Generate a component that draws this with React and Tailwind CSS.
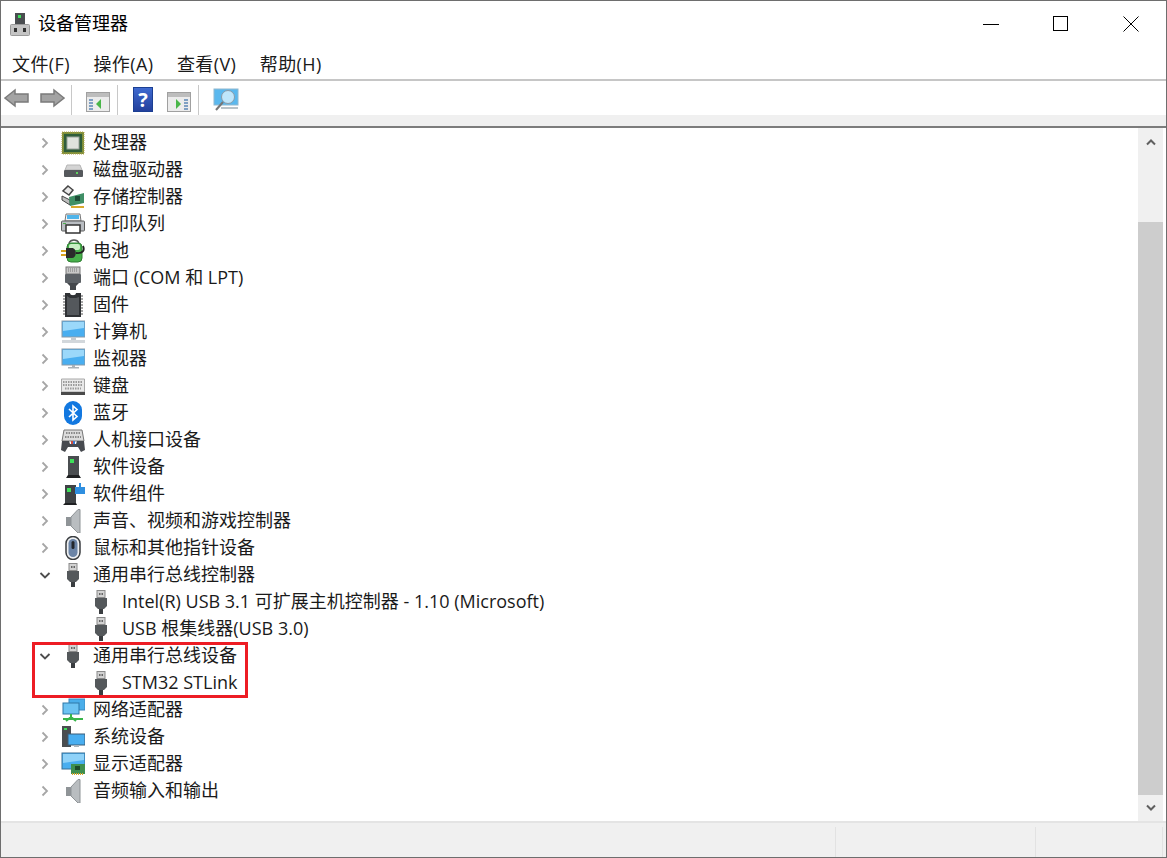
import React from 'react';

const fontStack = { fontFamily: '"Open Sans", "Noto Sans CJK SC", sans-serif' };

// tree icons, all 24x24
const Chip = () => (
  <svg width="24" height="24" viewBox="0 0 24 24">
    <rect x="1" y="1" width="22" height="22" fill="#7d8f3a" stroke="#b5a24a" strokeDasharray="1 1" />
    <rect x="3" y="3" width="18" height="18" fill="#2f5d3a" />
    <rect x="6" y="6" width="12" height="12" fill="#dfe3dc" stroke="#9aa39a" />
  </svg>
);

const Disk = () => (
  <svg width="24" height="24" viewBox="0 0 24 24">
    <path d="M4 12 L6 7 H19 L21 12 Z" fill="#d4d4d4" stroke="#b5b5b5" />
    <rect x="3" y="12" width="19" height="7" rx="1" fill="#55585c" />
    <rect x="15" y="14" width="2" height="2" fill="#5fd35f" />
  </svg>
);

const Storage = () => (
  <svg width="24" height="24" viewBox="0 0 24 24">
    <path d="M7 1 L12 5 L8 10 L2 6 Z" fill="#e8e8e8" stroke="#444" strokeWidth="1.5" />
    <path d="M1 11 L9 15 V20 L1 15 Z" fill="#bdbdbd" stroke="#444" />
    <path d="M8 12 L23 8 V18 L9 21 Z" fill="#3f8f66" />
    <rect x="14" y="11" width="5" height="5" fill="#1f4d38" />
    <path d="M10 21 H23 V23 H10 Z" fill="#d9a82e" />
  </svg>
);

const Printer = () => (
  <svg width="24" height="24" viewBox="0 0 24 24">
    <path d="M5 2 H19 L20 9 H4 Z" fill="#f4f4f4" stroke="#777" />
    <rect x="6" y="3" width="12" height="4" fill="#4fb4ea" />
    <rect x="0.5" y="9" width="23" height="10" rx="1" fill="#b9bdc2" stroke="#5c5c5c" />
    <rect x="5" y="13" width="14" height="8" fill="#fff" stroke="#333" strokeWidth="1.5" />
    <rect x="2" y="11" width="3" height="1" fill="#4fae4f" />
  </svg>
);

const Battery = () => (
  <svg width="24" height="24" viewBox="0 0 24 24">
    <path d="M8 4 C10 0 16 0 18 4" fill="none" stroke="#555" strokeWidth="1.5" />
    <rect x="6" y="4" width="15" height="19" rx="4" fill="#46b04a" stroke="#2e7d32" />
    <rect x="8" y="5" width="11" height="6" rx="2" fill="#c9eec4" />
    <path d="M0 12 H6 M0 16 H6" stroke="#d8a21e" strokeWidth="2" />
    <path d="M5 9 H11 C16 9 16 19 11 19 H5 Z" fill="#2b2b2b" />
    <path d="M15 14 C22 15 24 11 22 7" fill="none" stroke="#222" strokeWidth="1.8" />
  </svg>
);

const Port = () => (
  <svg width="24" height="24" viewBox="0 0 24 24">
    <rect x="5" y="1" width="14" height="7" fill="#c8c8c8" stroke="#777" />
    <path d="M7 3 H17 M7 5 H17" stroke="#777" strokeDasharray="1 1" />
    <rect x="4" y="8" width="16" height="9" rx="1" fill="#5c6166" />
    <path d="M6 17 L9 20 V24 H15 V20 L18 17 Z" fill="#44484c" />
  </svg>
);

const Firmware = () => (
  <svg width="24" height="24" viewBox="0 0 24 24">
    <path d="M2 3 H22 M2 6 H22 M2 9 H22 M2 12 H22 M2 15 H22 M2 18 H22 M2 21 H22" stroke="#8a8a8a" strokeWidth="1.5" />
    <path d="M4 0 H9 C9 3 15 3 15 0 H20 V24 H4 Z" fill="#2f3235" />
    <path d="M6 3 V22 H18 V4 L15 5 H9 Z" fill="#54585c" />
  </svg>
);

const Computer = () => (
  <svg width="24" height="24" viewBox="0 0 24 24">
    <rect x="1" y="1" width="23" height="16" fill="#49aef0" stroke="#8a9aa8" />
    <path d="M2 2 H23 V8 L2 11 Z" fill="#9bd8fa" />
    <rect x="10" y="17" width="5" height="3" fill="#c2c9cf" />
    <rect x="1" y="20" width="23" height="3" fill="#d2d7db" />
  </svg>
);

const Monitor = () => (
  <svg width="24" height="24" viewBox="0 0 24 24">
    <rect x="1" y="2" width="23" height="16" fill="#49aef0" stroke="#8a9aa8" />
    <path d="M2 3 H23 V9 L2 12 Z" fill="#9bd8fa" />
    <rect x="11" y="18" width="3" height="2" fill="#aab2b8" />
    <rect x="7" y="20" width="11" height="1.5" fill="#aab2b8" />
  </svg>
);

const Keyboard = () => (
  <svg width="24" height="24" viewBox="0 0 24 24">
    <path d="M0.5 5 H23.5 V18 H0.5 Z" fill="#e9e9e9" stroke="#a8a8a8" />
    <path d="M2 8 H22 M2 11 H22 M4 14.5 H20" stroke="#9b9b9b" strokeWidth="2" strokeDasharray="1.5 1" />
    <rect x="0" y="18" width="24" height="3" fill="#4a4a4a" />
  </svg>
);

const Bluetooth = () => (
  <svg width="24" height="24" viewBox="0 0 24 24">
    <rect x="3" y="0" width="18" height="24" rx="9" fill="#1278e0" />
    <path d="M8 8 L16 15.5 L12 19 V5 L16 8.5 L8 16" fill="none" stroke="#fff" strokeWidth="1.6" />
  </svg>
);

const Hid = () => (
  <svg width="24" height="24" viewBox="0 0 24 24">
    <path d="M3 2 H21 L23 13 H1 Z" fill="#dcdcdc" stroke="#777" />
    <path d="M5 5 H19 M4 9 H20" stroke="#8a8a8a" strokeWidth="2" strokeDasharray="1.5 1" />
    <path d="M1 13 H8 L9 16 H15 L16 13 H23 L24 22 L20 24 L17 19 H7 L4 24 L0 22 Z" fill="#474a4f" />
    <rect x="10" y="13" width="2" height="3" fill="#d14a3a" />
    <rect x="12" y="13" width="2" height="3" fill="#3a7bd1" />
  </svg>
);

const SoftwareDevice = () => (
  <svg width="24" height="24" viewBox="0 0 24 24">
    <rect x="7" y="1" width="11" height="19" fill="#4a4d50" />
    <rect x="9" y="4" width="4" height="4" fill="#3ee05a" />
    <path d="M7 20 H18 L20 23 H5 Z" fill="#1f2022" />
  </svg>
);

const SoftwareComponent = () => (
  <svg width="24" height="24" viewBox="0 0 24 24">
    <rect x="4" y="3" width="11" height="18" fill="#3f4245" />
    <rect x="6" y="6" width="4" height="4" fill="#3ee05a" />
    <path d="M4 21 H15 L16 23 H2 Z" fill="#1f2022" />
    <path d="M14 5 H18 V1 H20 V5 H24 V12 H14 Z" fill="#2f8fe0" />
  </svg>
);

const Speaker = () => (
  <svg width="24" height="24" viewBox="0 0 24 24">
    <rect x="5" y="8" width="5" height="9" fill="#8f9497" />
    <path d="M10 8 L17 0.5 H19 V24 H17 L10 17 Z" fill="#b9bdc0" stroke="#8e9396" />
  </svg>
);

const Mouse = () => (
  <svg width="24" height="24" viewBox="0 0 24 24">
    <rect x="5" y="0.5" width="14" height="23" rx="7" fill="#eef0f2" stroke="#3a3d40" strokeWidth="1.5" />
    <rect x="7.5" y="3" width="9" height="18" rx="4.5" fill="#6b84a6" />
    <rect x="10.5" y="5" width="3" height="8" rx="1.5" fill="#23272c" />
  </svg>
);

const Usb = () => (
  <svg width="24" height="24" viewBox="0 0 24 24">
    <rect x="8" y="0.5" width="8" height="7" fill="#d2d2d2" stroke="#8a8a8a" />
    <rect x="10" y="3" width="1.5" height="2" fill="#666" />
    <rect x="12.5" y="3" width="1.5" height="2" fill="#666" />
    <path d="M6 8 H18 V16 L15 19 H9 L6 16 Z" fill="#54585b" />
    <rect x="10" y="19" width="4" height="5" fill="#3a3d40" />
  </svg>
);

const Network = () => (
  <svg width="24" height="24" viewBox="0 0 24 24">
    <rect x="8" y="1" width="16" height="11" fill="#4aaeea" stroke="#3a88bd" />
    <rect x="2" y="5" width="16" height="11" fill="#6cc3f2" stroke="#2e78a8" />
    <path d="M10 16 V19 M2 21 H22 M10 19 L5 23 M10 19 L15 23" stroke="#39b54a" strokeWidth="2" />
  </svg>
);

const SystemDevice = () => (
  <svg width="24" height="24" viewBox="0 0 24 24">
    <rect x="1" y="1" width="9" height="21" fill="#4a4d50" />
    <rect x="3" y="3" width="3" height="2" fill="#3ee05a" />
    <rect x="7" y="9" width="17" height="11" fill="#49aef0" stroke="#3a5d78" />
    <rect x="13" y="20" width="5" height="2" fill="#a9b4bb" />
  </svg>
);

const Display = () => (
  <svg width="24" height="24" viewBox="0 0 24 24">
    <rect x="1" y="1" width="23" height="16" fill="#49aef0" stroke="#3a6f92" />
    <path d="M2 2 H23 V8 L2 11 Z" fill="#8fd2f8" />
    <rect x="10" y="12" width="14" height="10" fill="#3f8f4f" />
    <rect x="14" y="14" width="5" height="4" fill="#1d4a2a" />
    <path d="M11 22 H23" stroke="#d9a82e" strokeWidth="2" strokeDasharray="1 1" />
  </svg>
);

const Chevron = ({ open }) => (
  <svg width="12" height="12" viewBox="0 0 12 12" className="shrink-0">
    {open ? (
      <path d="M1.5 4 L6 8.5 L10.5 4" fill="none" stroke="#4d4d4d" strokeWidth="1.8" />
    ) : (
      <path d="M3.5 1.5 L8 6 L3.5 10.5" fill="none" stroke="#a6a6a6" strokeWidth="1.8" />
    )}
  </svg>
);

const rows = [
  { label: '处理器', Icon: Chip },
  { label: '磁盘驱动器', Icon: Disk },
  { label: '存储控制器', Icon: Storage },
  { label: '打印队列', Icon: Printer },
  { label: '电池', Icon: Battery },
  { label: '端口 (COM 和 LPT)', Icon: Port },
  { label: '固件', Icon: Firmware },
  { label: '计算机', Icon: Computer },
  { label: '监视器', Icon: Monitor },
  { label: '键盘', Icon: Keyboard },
  { label: '蓝牙', Icon: Bluetooth },
  { label: '人机接口设备', Icon: Hid },
  { label: '软件设备', Icon: SoftwareDevice },
  { label: '软件组件', Icon: SoftwareComponent },
  { label: '声音、视频和游戏控制器', Icon: Speaker },
  { label: '鼠标和其他指针设备', Icon: Mouse },
  { label: '通用串行总线控制器', Icon: Usb, open: true },
  { label: 'Intel(R) USB 3.1 可扩展主机控制器 - 1.10 (Microsoft)', Icon: Usb, child: true },
  { label: 'USB 根集线器(USB 3.0)', Icon: Usb, child: true },
  { label: '通用串行总线设备', Icon: Usb, open: true },
  { label: 'STM32 STLink', Icon: Usb, child: true },
  { label: '网络适配器', Icon: Network },
  { label: '系统设备', Icon: SystemDevice },
  { label: '显示适配器', Icon: Display },
  { label: '音频输入和输出', Icon: Speaker },
];

const TreeRow = ({ label, Icon, open, child }) => (
  <div className={`flex h-[27px] items-center ${child ? 'pl-[88px]' : 'pl-[38px]'}`}>
    {child ? null : <Chevron open={open} />}
    <span className={`flex w-[24px] shrink-0 justify-center ${child ? '' : 'ml-[10px]'}`}>
      <Icon />
    </span>
    <span className={`whitespace-nowrap text-[18px] text-[#1a1a1a] ${child ? 'ml-[9px]' : 'ml-[8px]'}`}>{label}</span>
  </div>
);

const Divider = () => <div className="mx-[6px] h-[30px] w-px bg-[#c8c8c8]" />;

const ArrowBtn = ({ flip }) => (
  <svg width="26" height="24" viewBox="0 0 26 24" className={flip ? '-scale-x-100' : ''}>
    <path d="M1 12 L11 4 V8 H24 V16 H11 V20 Z" fill="#a3a3a3" stroke="#7b7b7b" strokeWidth="1.5" />
  </svg>
);

const PaneIcon = ({ right }) => (
  <svg width="24" height="24" viewBox="0 0 24 24">
    <rect x="0.5" y="2.5" width="23" height="19" fill="#ececec" stroke="#a0a0a0" />
    <rect x="1" y="3" width="22" height="4" fill="#bdbdbd" />
    <path d={right ? 'M17 10 H21 M17 13 H21 M17 16 H21 M17 19 H21' : 'M3 10 H7 M3 13 H7 M3 16 H7 M3 19 H7'} stroke="#5b86b5" strokeWidth="1.5" />
    <path d={right ? 'M9 9 L14 14 L9 19 Z' : 'M15 9 L10 14 L15 19 Z'} fill="#49b649" />
  </svg>
);

const App = () => {
  return (
    <div style={fontStack} className="flex h-[858px] w-[1167px] flex-col overflow-hidden border border-[#6e6e6e] bg-white">
      {/* title bar */}
      <div className="flex h-[47px] shrink-0 items-center pb-[2px]">
        <svg width="20" height="24" viewBox="0 0 20 24" className="ml-[9px]">
          <rect x="5" y="1" width="10" height="12" fill="#4a4d50" />
          <rect x="8" y="3" width="3" height="3" fill="#3ee05a" />
          <rect x="0.5" y="12.5" width="19" height="11" rx="1" fill="#c4c4c4" stroke="#9a9a9a" />
          <rect x="4" y="16" width="3" height="4" fill="#333" />
          <rect x="13" y="16" width="3" height="4" fill="#333" />
        </svg>
        <span className="ml-[8px] text-[18px] text-black">设备管理器</span>
        <div className="ml-auto flex items-center">
          <svg width="16" height="16" viewBox="0 0 16 16"><path d="M0 8.5 H16" stroke="#000" /></svg>
          <svg width="16" height="16" viewBox="0 0 16 16" className="ml-[54px]"><rect x="0.5" y="0.5" width="14" height="14" fill="none" stroke="#000" /></svg>
          <svg width="16" height="16" viewBox="0 0 16 16" className="ml-[54px] mr-[27px]"><path d="M0.5 0.5 L15.5 15.5 M15.5 0.5 L0.5 15.5" stroke="#000" /></svg>
        </div>
      </div>
      {/* menu */}
      <div className="flex h-[33px] shrink-0 items-center gap-[23.5px] border-b-2 border-[#c6c6c6] pl-[11px] pt-[2px] text-[18px] tracking-[0.4px] text-[#1a1a1a]">
        <span>文件(F)</span>
        <span>操作(A)</span>
        <span>查看(V)</span>
        <span>帮助(H)</span>
      </div>
      {/* toolbar */}
      <div className="flex h-[34px] shrink-0 items-center pl-[3px] pt-[3px]">
        <span className="mb-[3px] flex"><ArrowBtn /></span>
        <span className="mb-[3px] ml-[9px] flex"><ArrowBtn flip /></span>
        <Divider />
        <span className="ml-[8px] mt-[4px] flex"><PaneIcon /></span>
        <span className="ml-[1px]"><Divider /></span>
        <span className="ml-[9px] flex h-[25px] w-[20px] items-center justify-center border border-[#1b3f93] bg-gradient-to-b from-[#3f6ad0] to-[#23409c] text-[20px] font-bold text-white">?</span>
        <span className="ml-[14px] mt-[4px] flex"><PaneIcon right /></span>
        <span className="ml-[1px]"><Divider /></span>
        <svg width="26" height="24" viewBox="0 0 26 24" className="ml-[8px]">
          <rect x="1" y="1" width="24" height="16" fill="#5ab8ee" stroke="#8fb8d0" />
          <circle cx="15" cy="9" r="6.5" fill="#bfe6fb" stroke="#8a9aa8" />
          <path d="M10 14 L3 22" stroke="#777" strokeWidth="2" />
          <path d="M8 20 H25" stroke="#b8c2c8" strokeWidth="2" />
        </svg>
      </div>
      <div className="h-[11px] shrink-0 bg-[#f0f0f0]" />
      <div className="h-[2px] shrink-0 bg-[#7c7c7c]" />
      {/* tree + scrollbar */}
      <div className="flex min-h-0 flex-1 border-b-2 border-[#e4e4e4]">
        <div className="relative min-w-0 flex-1 pt-[1px]">
          {rows.map((row) => (
            <TreeRow key={row.label} {...row} />
          ))}
          <div className="absolute left-[31px] top-[514px] h-[56px] w-[216px] border-[3px] border-[#ed1c24]" />
        </div>
        <div className="mr-[3px] flex w-[25px] shrink-0 flex-col bg-[#f0f0f0]">
          <div className="flex h-[94px] shrink-0 items-start justify-center pt-[10px]">
            <svg width="10" height="8" viewBox="0 0 10 8"><path d="M1 6.5 L5 2.5 L9 6.5" fill="none" stroke="#606060" strokeWidth="2" /></svg>
          </div>
          <div className="flex-1 bg-[#cdcdcd]" />
          <div className="flex h-[26px] shrink-0 items-center justify-center">
            <svg width="10" height="8" viewBox="0 0 10 8"><path d="M1 1.5 L5 5.5 L9 1.5" fill="none" stroke="#606060" strokeWidth="2" /></svg>
          </div>
        </div>
      </div>
      {/* status bar */}
      <div className="flex h-[34px] shrink-0 justify-end bg-[#f0f0f0] pr-[3px] pt-[4px]">
        <div className="w-px bg-[#e2e2e2]" />
        <div className="w-[200px] border-r border-[#e2e2e2]" />
        <div className="w-[127px] border-r border-[#e2e2e2]" />
      </div>
    </div>
  );
};

export default App;
